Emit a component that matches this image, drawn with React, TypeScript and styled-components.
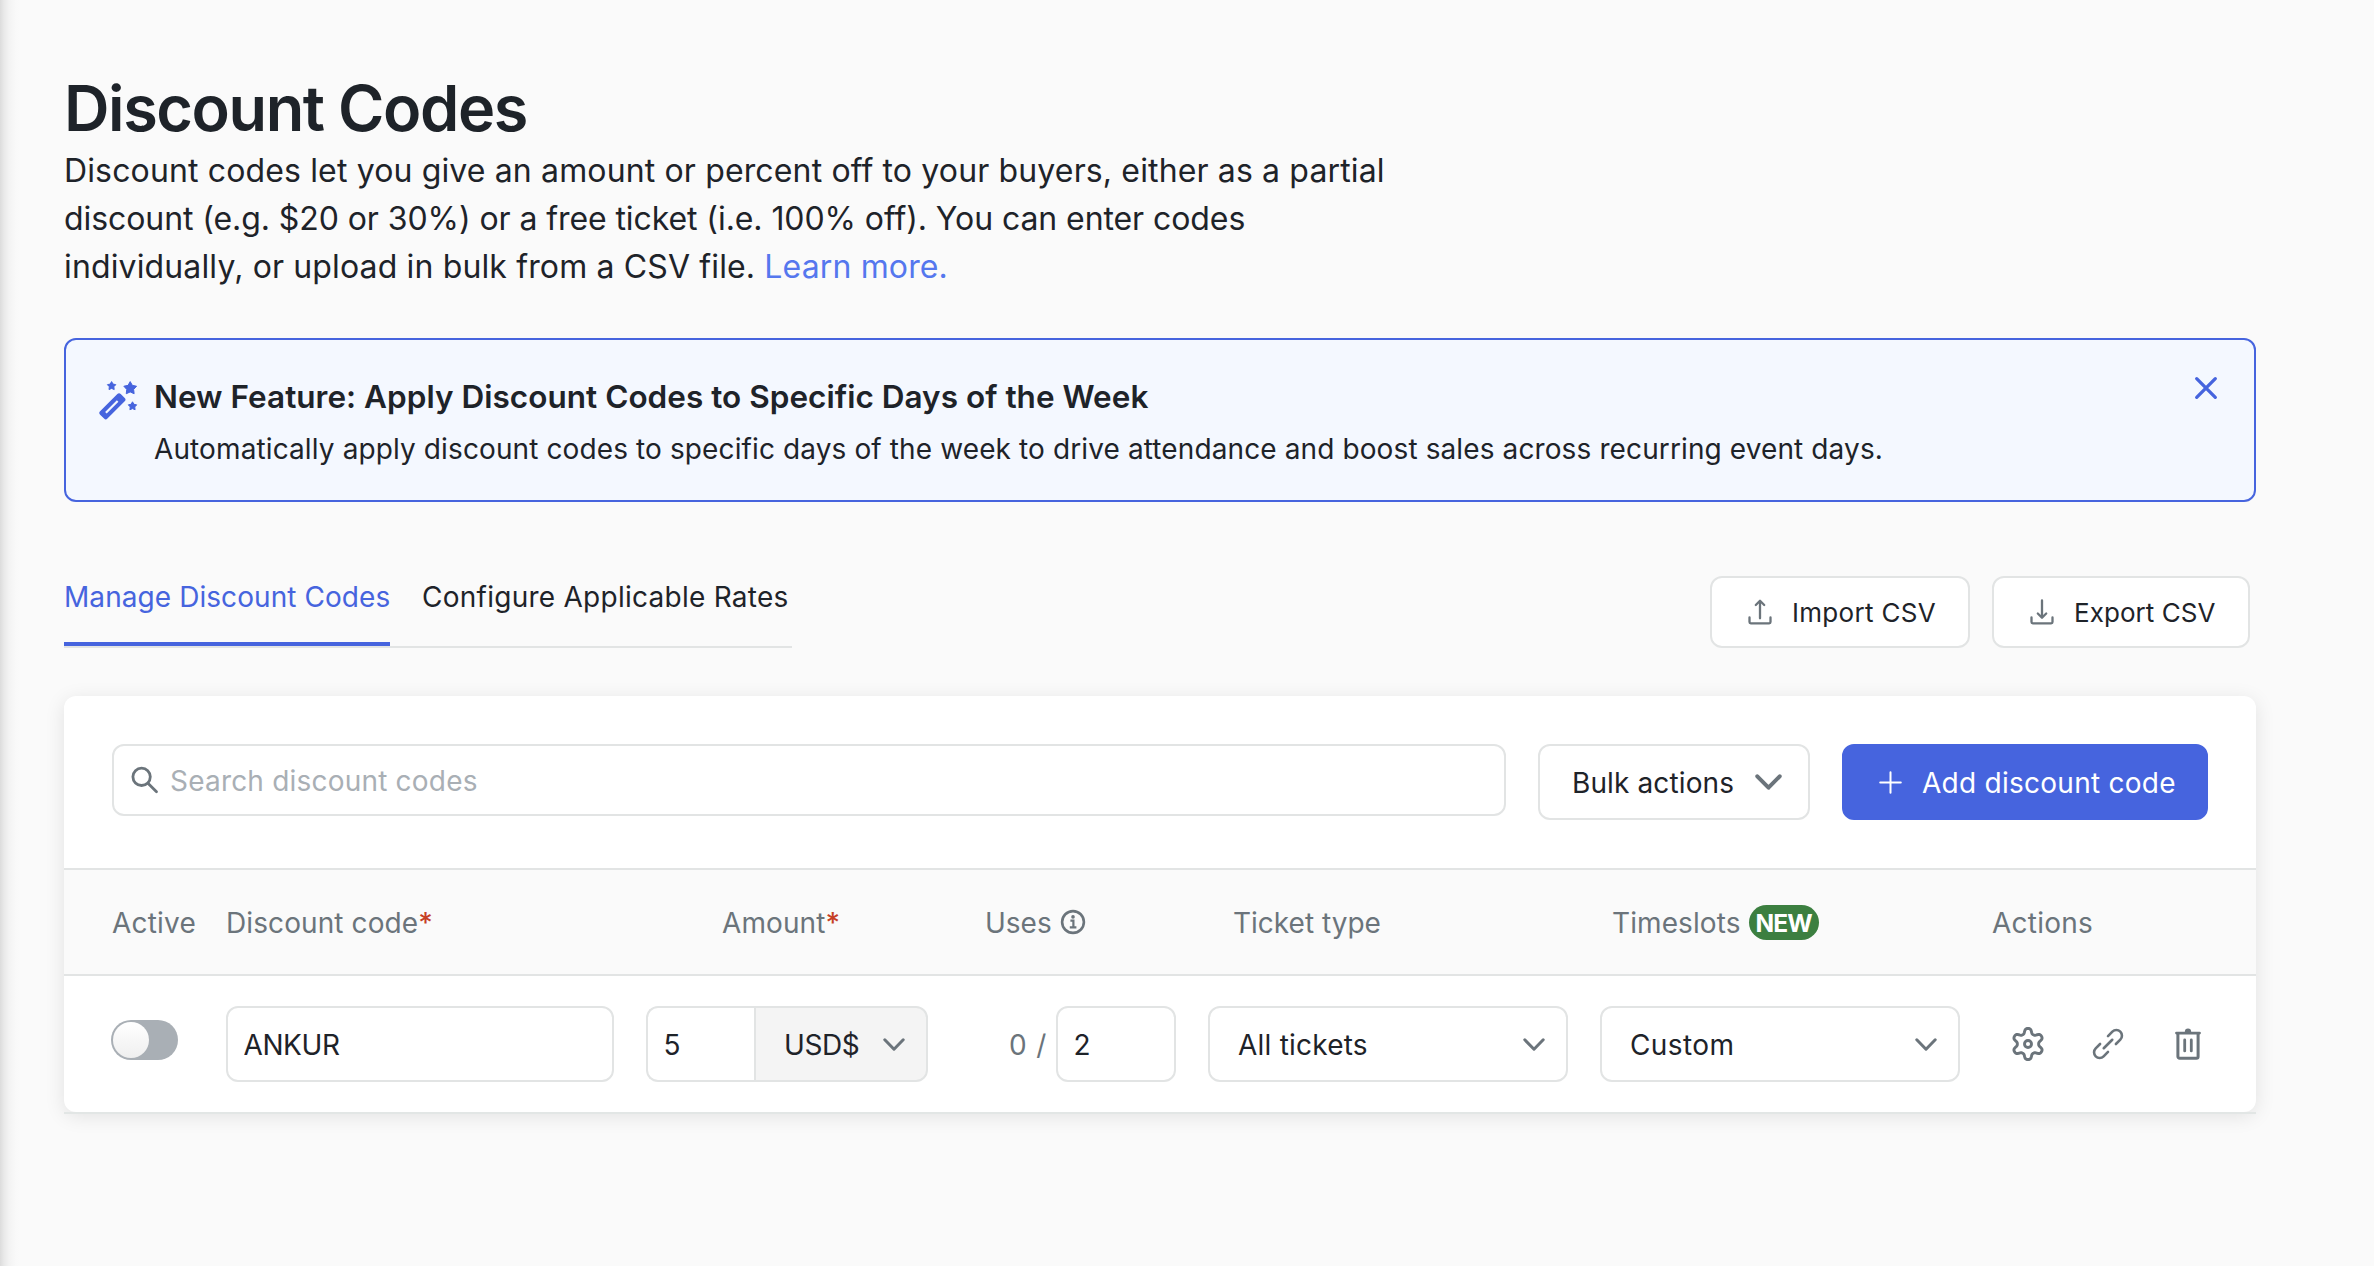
import React from "react";
import styled, { createGlobalStyle } from "styled-components";

const ink = "#1e2329";
const muted = "#6b747b";
const blue = "#4664de";
const line = "#e2e4e4";

const GlobalStyle = createGlobalStyle`
  * { box-sizing: border-box; }
  body { margin: 0; background: #fafafa; }
  button, input { font: inherit; color: inherit; letter-spacing: inherit; }
`;

const Page = styled.main`
  height: 1266px;
  overflow: hidden;
  padding: 74px 118px 0 64px;
  background: linear-gradient(90deg, #dcdcdc 0, #e9e9e9 4px, #f3f3f3 9px, #f9f9f9 16px, #fafafa 20px);
  font-family: Inter, "Liberation Sans", sans-serif;
  font-size: 28px;
  color: ${ink};
`;

const Title = styled.h1`
  margin: 0;
  font-size: 63px;
  font-weight: 600;
  line-height: 68px;
  letter-spacing: -1.42px;
`;

const Intro = styled.p`
  margin: 5px 0 0;
  font-size: 32px;
  line-height: 48px;
`;

const Line = styled.span<{ $track: number }>`
  display: block;
  white-space: nowrap;
  letter-spacing: ${(p) => p.$track}px;
`;

const Learn = styled.a`
  color: #5577ee;
`;

const Alert = styled.section`
  display: flex;
  align-items: flex-start;
  height: 164px;
  margin-top: 47px;
  padding: 37px 36px 0 33px;
  border: 2px solid ${blue};
  border-radius: 12px;
  background: #f4f8ff;
`;

const AlertIcon = styled.svg`
  flex: none;
  width: 40px;
  height: 40px;
  margin-top: 3px;
`;

const AlertBody = styled.div`
  flex: 1;
  margin-left: 15px;
`;

const AlertTitle = styled.h2`
  margin: 0;
  font-size: 31.5px;
  font-weight: 600;
  line-height: 40px;
  letter-spacing: 0.025px;
`;

const AlertText = styled.p`
  margin: 11px 0 0;
  font-size: 28px;
  line-height: 42px;
  letter-spacing: 0.113px;
`;

const IconButton = styled.button`
  display: flex;
  padding: 0;
  border: 0;
  background: none;
  color: ${muted};
`;

const Dismiss = styled(IconButton)`
  margin-top: -1px;
`;

const Bar = styled.div`
  display: flex;
  justify-content: space-between;
  height: 72px;
  margin-top: 74px;
  padding-right: 6px;
`;

const Tabs = styled.nav`
  display: flex;
  width: 728px;
  border-bottom: 2px solid ${line};
  gap: 32px;
`;

const Tab = styled.a<{ $on?: boolean; $track: number }>`
  height: 70px;
  padding-top: 1px;
  width: ${(p) => (p.$on ? "326px" : "auto")};
  line-height: 40px;
  white-space: nowrap;
  color: ${(p) => (p.$on ? blue : ink)};
  border-bottom: 4px solid ${(p) => (p.$on ? blue : "transparent")};
  letter-spacing: ${(p) => p.$track}px;
`;

const Group = styled.div<{ $gap: number }>`
  display: flex;
  gap: ${(p) => p.$gap}px;
`;

const Button = styled.button<{ $w: number; $h: number; $pad: number; $gap: number; $primary?: boolean; $track: number; $size?: number }>`
  display: flex;
  flex: none;
  align-items: center;
  gap: ${(p) => p.$gap}px;
  width: ${(p) => p.$w}px;
  height: ${(p) => p.$h}px;
  padding: 0 0 0 ${(p) => p.$pad}px;
  border: 2px solid ${(p) => (p.$primary ? blue : line)};
  border-radius: 12px;
  background: ${(p) => (p.$primary ? blue : "#fff")};
  color: ${(p) => (p.$primary ? "#fff" : ink)};
  font-size: ${(p) => p.$size ?? 28}px;
  white-space: nowrap;
  letter-spacing: ${(p) => p.$track}px;
`;

const Label = styled.span`
  padding-top: 2px;
`;

const Card = styled.section`
  height: 416px;
  margin-top: 48px;
  border-radius: 12px;
  background: #fff;
  box-shadow: 0 4px 20px rgba(0, 0, 0, 0.1);
`;

const Rule = styled.div`
  height: 2px;
  background: #e2e6e5;
`;

const Toolbar = styled.div`
  display: flex;
  gap: 32px;
  height: 172px;
  padding: 48px 48px 0;
`;

const Search = styled.label`
  display: flex;
  align-items: center;
  gap: 11px;
  width: 1394px;
  height: 72px;
  padding-left: 17px;
  border: 2px solid ${line};
  border-radius: 12px;
`;

const SearchInput = styled.input`
  flex: 1;
  min-width: 0;
  padding: 2px 0 0;
  border: 0;
  outline: 0;
  background: none;
  letter-spacing: 0.2px;
  &::placeholder { color: #a9afb5; opacity: 1; }
`;

const columns = "114px 420px 314px 248px 392px 392px 264px";

const Head = styled.div`
  display: grid;
  grid-template-columns: ${columns};
  align-items: center;
  height: 108px;
  padding-left: 48px;
  border: solid ${line};
  border-width: 2px 0;
  background: #fafafa;
  color: ${muted};
`;

const HeadCell = styled.div<{ $indent?: number; $track: number }>`
  display: flex;
  align-items: center;
  padding-left: ${(p) => p.$indent ?? 0}px;
  white-space: nowrap;
  letter-spacing: ${(p) => p.$track}px;
`;

const Star = styled.span`
  color: #c63f26;
  font-weight: 500;
`;

const Info = styled.svg`
  width: 26px;
  height: 26px;
  margin: 0 0 1px 8px;
`;

const Badge = styled.span`
  width: 70px;
  height: 35px;
  margin-left: 8px;
  border-radius: 18px;
  background: #3c7f40;
  color: #fff;
  font-size: 24.5px;
  font-weight: 700;
  line-height: 36px;
  text-align: center;
  letter-spacing: -0.9px;
`;

const Row = styled.div`
  display: grid;
  grid-template-columns: ${columns};
  height: 136px;
  padding: 30px 0 0 48px;
`;

const Cell = styled.div<{ $indent?: number }>`
  display: flex;
  height: 76px;
  align-items: center;
  padding-left: ${(p) => p.$indent ?? 0}px;
`;

const Toggle = styled.button`
  width: 67px;
  height: 40px;
  margin: 0 0 8px -1px;
  padding: 2px;
  border: 0;
  border-radius: 20px;
  background: #a9afb5;
`;

const Knob = styled.span`
  display: block;
  width: 36px;
  height: 36px;
  border-radius: 50%;
  background: linear-gradient(#fff, #efefef);
`;

const Field = styled.input<{ $w: number; $left?: boolean; $track?: number }>`
  width: ${(p) => p.$w}px;
  height: 76px;
  padding: 2px 0 0 15.5px;
  border: 2px solid ${line};
  border-right-width: ${(p) => (p.$left ? 0 : 2)}px;
  border-radius: ${(p) => (p.$left ? "12px 0 0 12px" : "12px")};
  outline: 0;
  background: #fff;
  letter-spacing: ${(p) => p.$track ?? 0}px;
`;

const Select = styled.div<{ $w: number; $pad: number; $end: number; $joined?: boolean; $track: number }>`
  display: flex;
  align-items: center;
  justify-content: space-between;
  width: ${(p) => p.$w}px;
  height: 76px;
  padding: 0 ${(p) => p.$end}px 0 ${(p) => p.$pad}px;
  border: 2px solid ${line};
  border-radius: ${(p) => (p.$joined ? "0 12px 12px 0" : "12px")};
  background: ${(p) => (p.$joined ? "#f4f4f4" : "#fff")};
  letter-spacing: ${(p) => p.$track}px;
`;

const Used = styled.span`
  width: 47px;
  padding-top: 2px;
  color: ${muted};
  white-space: nowrap;
  letter-spacing: 0.9px;
`;

const Chevron = ({ w = 22, h = 13, s = 3 }: { w?: number; h?: number; s?: number }) => (
  <svg width={w} height={h} viewBox={`0 0 ${w} ${h}`} fill="none" stroke={muted} strokeWidth={s} strokeLinecap="round" strokeLinejoin="round">
    <path d={`M${s / 2 + 0.3} ${s / 2 + 0.3}L${w / 2} ${h - s / 2 - 0.3}L${w - s / 2 - 0.3} ${s / 2 + 0.3}`} />
  </svg>
);

const Transfer = ({ up }: { up?: boolean }) => (
  <svg width="24" height="26" viewBox="0 0 24 26" fill="none" stroke={muted} strokeWidth="2.3" strokeLinecap="round" strokeLinejoin="round">
    <path d="M1.5 18.5V23a1.3 1.3 0 0 0 1.3 1.3h18.4a1.3 1.3 0 0 0 1.3-1.3v-4.5" />
    <path d={up ? "M12 19.3V2M7.8 6 12 1.8 16.2 6" : "M12 1.5v17M7.8 14.5l4.2 4.2 4.2-4.2"} />
  </svg>
);

const star = (x: number, y: number, r: number) =>
  Array.from({ length: 10 }, (_, i) => {
    const a = -Math.PI / 2 + (i * Math.PI) / 5;
    const d = i % 2 ? r * 0.54 : r;
    return `${(x + d * Math.cos(a)).toFixed(2)},${(y + d * Math.sin(a)).toFixed(2)}`;
  }).join(" ");

/* Six rounded teeth, one of them pointing straight up. */
const gearOutline = Array.from({ length: 120 }, (_, i) => {
  const a = (i * Math.PI) / 60;
  const r = 13.1 + (2.45 * Math.tanh(1.5 * Math.cos(6 * a))) / Math.tanh(1.5);
  return `${(18 + r * Math.sin(a)).toFixed(2)},${(18 - r * Math.cos(a)).toFixed(2)}`;
}).join(" ");

const GearIcon = () => (
  <svg width="36" height="36" viewBox="0 0 36 36" fill="none" stroke={muted} strokeWidth="2.9" strokeLinejoin="round">
    <polygon points={gearOutline} />
    <circle cx="18" cy="18" r="3.5" />
  </svg>
);

const LinkIcon = () => (
  <svg width="36" height="36" viewBox="0 0 36 36" fill="none" stroke={muted} strokeWidth="2.6" strokeLinecap="round">
    <g transform="translate(18 18) rotate(-45)">
      <path d="M5.6-5.6H11.8a5.6 5.6 0 0 1 0 11.2H5.6" />
      <path d="M-5.6-5.6H-11.8a5.6 5.6 0 0 0 0 11.2H-5.6" />
      <path d="M-6 0H6" />
    </g>
  </svg>
);

const TrashIcon = () => (
  <svg width="36" height="36" viewBox="0 0 36 36" fill="none" stroke={muted} strokeWidth="3" strokeLinecap="round" strokeLinejoin="round">
    <path d="M6.5 7.1h23" strokeWidth="2.8" />
    <path d="M14.8 6a3.2 3.4 0 0 1 6.4 0z" fill={muted} stroke="none" />
    <path d="M7.9 8v22.6a1.7 1.7 0 0 0 1.7 1.7h16.8a1.7 1.7 0 0 0 1.7-1.7V8" />
    <path d="M14.7 14v10.9M21.3 14v10.9" strokeWidth="2.8" />
  </svg>
);

export default function App() {
  return (
    <>
      <GlobalStyle />
      <Page>
        <Title>Discount Codes</Title>
        <Intro>
          <Line $track={0.14}>Discount codes let you give an amount or percent off to your buyers, either as a partial</Line>
          <Line $track={-0.08}>discount (e.g. $20 or 30%) or a free ticket (i.e. 100% off). You can enter codes</Line>
          <Line $track={0.14}>individually, or upload in bulk from a CSV file. <Learn>Learn more.</Learn></Line>
        </Intro>

        <Alert>
          <AlertIcon viewBox="0 0 40 40">
            <g fill={blue} stroke={blue} strokeWidth="1" strokeLinejoin="round">
              <polygon points={star(12.6, 6, 4.4)} />
              <polygon points={star(31.2, 8.3, 6.7)} />
              <polygon points={star(33.5, 26.2, 4.4)} />
            </g>
            <g transform="translate(13.4 26.3) rotate(-45)">
              <rect x="-14.6" y="-5.2" width="29.2" height="10.4" rx="2.4" fill={blue} />
              <path d="M-9.2 0H7.4" stroke="#f4f8ff" strokeWidth="2.2" />
            </g>
          </AlertIcon>
          <AlertBody>
            <AlertTitle>New Feature: Apply Discount Codes to Specific Days of the Week</AlertTitle>
            <AlertText>Automatically apply discount codes to specific days of the week to drive attendance and boost sales across recurring event days.</AlertText>
          </AlertBody>
          <Dismiss aria-label="Dismiss">
            <svg width="24" height="24" viewBox="0 0 24 24" stroke={blue} strokeWidth="3.3" strokeLinecap="round">
              <path d="M2.7 2.7l18.6 18.6M21.3 2.7L2.7 21.3" />
            </svg>
          </Dismiss>
        </Alert>

        <Bar>
          <Tabs>
            <Tab $on $track={0.07}>Manage Discount Codes</Tab>
            <Tab $track={0.26}>Configure Applicable Rates</Tab>
          </Tabs>
          <Group $gap={22}>
            <Button $w={260} $h={72} $pad={36} $gap={20} $track={0.3} $size={26}><Transfer up />Import CSV</Button>
            <Button $w={258} $h={72} $pad={36} $gap={20} $track={0.06} $size={26}><Transfer />Export CSV</Button>
          </Group>
        </Bar>

        <Card>
          <Toolbar>
            <Search>
              <svg width="28" height="28" viewBox="0 0 28 28" fill="none" stroke={muted} strokeWidth="2.8" strokeLinecap="round">
                <circle cx="10.6" cy="10.8" r="8.7" />
                <path d="M17.2 17.5 25.5 25.8" />
              </svg>
              <SearchInput placeholder="Search discount codes" />
            </Search>
            <Button $w={272} $h={76} $pad={32} $gap={21} $track={0.12}><Label>Bulk actions</Label><Chevron w={27} h={16} s={4} /></Button>
            <Button $w={366} $h={76} $pad={35} $gap={20} $primary $track={0.26}>
              <svg width="23" height="23" viewBox="0 0 23 23" stroke="#fff" strokeWidth="2" strokeLinecap="round">
                <path d="M11.5 1.2v20.6M1.2 11.5h20.6" />
              </svg>
              <Label>Add discount code</Label>
            </Button>
          </Toolbar>
          <Head>
            <HeadCell $track={0.2}><Label>Active</Label></HeadCell>
            <HeadCell $track={0.1}><Label>Discount code<Star>*</Star></Label></HeadCell>
            <HeadCell $indent={76} $track={0.1}><Label>Amount<Star>*</Star></Label></HeadCell>
            <HeadCell $indent={25} $track={0}>
              <Label>Uses</Label>
              <Info viewBox="0 0 26 26" fill="none" stroke={muted} strokeWidth="2.6">
                <circle cx="13" cy="13" r="10.9" />
                <path d="M10.4 11.6h3v6.2M9.8 18.4h6.6" strokeWidth="2.2" />
                <circle cx="13" cy="7.9" r="1.8" fill={muted} stroke="none" />
              </Info>
            </HeadCell>
            <HeadCell $indent={25} $track={0}><Label>Ticket type</Label></HeadCell>
            <HeadCell $indent={12} $track={0.1}><Label>Timeslots</Label><Badge>NEW</Badge></HeadCell>
            <HeadCell $track={0.25}><Label>Actions</Label></HeadCell>
          </Head>
          <Row>
            <Cell><Toggle aria-label="Active"><Knob /></Toggle></Cell>
            <Cell><Field $w={388} $track={-0.4} defaultValue="ANKUR" /></Cell>
            <Cell>
              <Field $w={108} $left defaultValue="5" />
              <Select $w={174} $pad={28} $end={21} $joined $track={-0.4}><Label>USD$</Label><Chevron /></Select>
            </Cell>
            <Cell $indent={49}>
              <Used>0 /</Used>
              <Field $w={120} defaultValue="2" />
            </Cell>
            <Cell><Select $w={360} $pad={28} $end={21} $track={0.22}><Label>All tickets</Label><Chevron /></Select></Cell>
            <Cell><Select $w={360} $pad={28} $end={21} $track={0.4}><Label>Custom</Label><Chevron /></Select></Cell>
            <Cell $indent={18}>
              <Group $gap={44}>
                <IconButton aria-label="Settings"><GearIcon /></IconButton>
                <IconButton aria-label="Copy link"><LinkIcon /></IconButton>
                <IconButton aria-label="Delete"><TrashIcon /></IconButton>
              </Group>
            </Cell>
          </Row>
        </Card>
        <Rule />
      </Page>
    </>
  );
}
